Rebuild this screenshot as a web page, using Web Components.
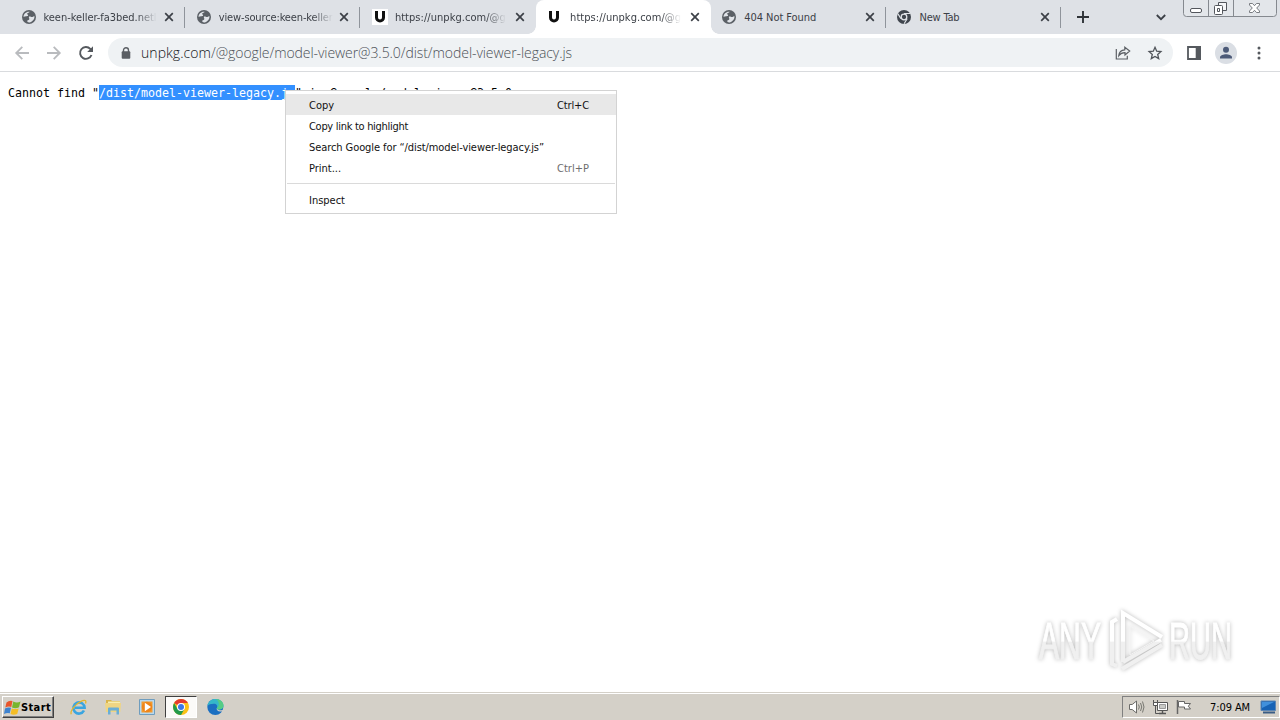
<!DOCTYPE html>
<html lang="en">
<head>
<meta charset="utf-8">
<title>unpkg</title>
<style>
  body {
    margin: 0;
    width: 1280px;
    height: 720px;
    overflow: hidden;
    background: #fff;
    font: 11px "DejaVu Sans Condensed", "DejaVu Sans", sans-serif;
    color: #000;
  }
</style>
</head>
<body>
<browser-window>
  <tab-strip slot="tabs">
    <browser-tab icon="globe" fit="113" fade>keen-keller-fa3bed.netl</browser-tab>
    <browser-tab icon="globe" fit="114" fade>view-source:keen-keller</browser-tab>
    <browser-tab icon="unpkgBox" fit="111" fade last>https://unpkg.com/@g</browser-tab>
    <browser-tab icon="unpkg" fit="111" fade active>https://unpkg.com/@g</browser-tab>
    <browser-tab icon="globe" fit="72">404 Not Found</browser-tab>
    <browser-tab icon="chromeMono" fit="40">New Tab</browser-tab>
  </tab-strip>
  <tool-bar slot="toolbar"></tool-bar>
  <page-view>
    <context-menu>
      <menu-item keys="Ctrl+C" fit="25" selected>Copy</menu-item>
      <menu-item fit="99">Copy link to highlight</menu-item>
      <menu-item fit="235">Search Google for “/dist/model-viewer-legacy.js”</menu-item>
      <menu-item keys="Ctrl+P" fit="32" dim>Print...</menu-item>
      <menu-line></menu-line>
      <menu-item fit="36">Inspect</menu-item>
    </context-menu>
    <any-run></any-run>
  </page-view>
</browser-window>
<task-bar></task-bar>

<script>
const ICONS = {
  globe: `<svg width="14" height="14" viewBox="0 0 14 14"><circle cx="7" cy="7" r="7" fill="#5b6066"/><path d="M7.600 1.700c-.3 1.300-2.400.8-2.500 2.100-.1.9 1.200.8 1 1.800-.2.8-1.300.6-2.100.7-.9.1-1.600.6-2.500.4C1.600 4 4 1.400 7.600 1.700z" fill="#e1e4e9"/><path d="M7 6.600c1.400-.5 1.900.6 3 .5 1-.1 1.200-1.200 2.500-.8.2 3-2.300 5.800-5 6.100-1.500.1-2.300-.5-2.300-1.400 0-1 1.300-.8 2-1.600.6-.8-.9-1.700-.2-2.800z" fill="#e1e4e9"/></svg>`,
  unpkg: `<svg width="12" height="12" viewBox="0 0 12 12"><path d="M2.500 0v6.500a3.500 3.500 0 0 0 7 0V0" fill="none" stroke="#111" stroke-width="3"/></svg>`,
  unpkgBox: `<svg width="16" height="16" viewBox="0 0 16 16"><path d="M0 0h16v16H0z" fill="#fff"/><path d="M4.500 2v6.500a3.500 3.500 0 0 0 7 0V2" fill="none" stroke="#111" stroke-width="3"/></svg>`,
  chromeMono: `<svg width="14" height="14" viewBox="0 0 14 14"><circle cx="7" cy="7" r="7" fill="#3f454d"/><circle cx="7" cy="7" r="2.800" fill="#3f454d" stroke="#dee1e6" stroke-width="1.300"/><path d="M7 3.500h6.200M3.900 8.600.9 3.700M10.100 8.700l-3 5" stroke="#dee1e6" stroke-width="1.200"/></svg>`,
  close: `<svg width="10" height="10" viewBox="0 0 10 10"><path d="M1.200 1.200l7.600 7.600M8.800 1.200L1.200 8.800" stroke="#3c4047" stroke-width="1.700"/></svg>`,
  plus: `<svg width="12" height="12" viewBox="0 0 12 12"><path d="M6 0v12M0 6h12" stroke="#2f3338" stroke-width="1.900"/></svg>`,
  chevron: `<svg width="10" height="7" viewBox="0 0 10 7"><path d="M.8 1L5 5.200 9.200 1" fill="none" stroke="#3c4047" stroke-width="1.800"/></svg>`,
  back: `<svg width="14" height="14" viewBox="0 0 14 14"><path d="M14 7H1.500M7.300.8L1.200 7l6.100 6.200" fill="none" stroke="#b9bbbe" stroke-width="1.800"/></svg>`,
  forward: `<svg width="14" height="14" viewBox="0 0 14 14"><path d="M0 7h12.500M6.700.8L12.800 7l-6.100 6.200" fill="none" stroke="#b9bbbe" stroke-width="1.800"/></svg>`,
  reload: `<svg width="14" height="14" viewBox="0 0 14 14"><path d="M12.500 9A5.900 5.900 0 1 1 11.300 2.900L13 4.800" fill="none" stroke="#55595e" stroke-width="1.900"/><path d="M14 .2V6H8.200z" fill="#55595e"/></svg>`,
  lock: `<svg width="10" height="12" viewBox="0 0 10 12"><path d="M2.500 5V3.200a2.500 2.500 0 0 1 5 0V5" fill="none" stroke="#5b5f64" stroke-width="1.400"/><rect x=".7" y="4.200" width="8.600" height="7.500" rx="1" fill="#5b5f64"/></svg>`,
  share: `<svg width="16" height="14" viewBox="0 0 16 14"><path d="M1.300 3v10h11V9.800M3.800 9.600c.3-3.600 2.400-5.600 6-5.800V1.200L14.700 5 10 9V6.700C7.400 6.700 5.300 7.600 3.800 9.600z" fill="none" stroke="#5b5f64" stroke-width="1.200"/></svg>`,
  star: `<svg width="14" height="14" viewBox="0 0 14 14"><path d="M7 1.300l1.700 3.900 4.200.4-3.200 2.800 1 4.200L7 10.400l-3.700 2.200 1-4.200L1.100 5.600l4.200-.4z" fill="none" stroke="#50545a" stroke-width="1.300"/></svg>`,
  panel: `<svg width="14" height="14" viewBox="0 0 14 14"><path d="M1 1h12v12H1z" fill="none" stroke="#55595e" stroke-width="1.800"/><path d="M8.700 0H14v14H8.700z" fill="#55595e"/></svg>`,
  person: `<svg width="22" height="22" viewBox="0 0 22 22"><circle cx="11" cy="11" r="11" fill="#dadee4"/><circle cx="11" cy="7.800" r="3" fill="#4c5a78"/><path d="M5 16.500v-1.300c0-2 3.700-3 6-3s6 1 6 3v1.300z" fill="#4c5a78"/></svg>`,
  dots: `<svg width="4" height="14" viewBox="0 0 4 14"><circle cx="2" cy="2" r="1.500"/><circle cx="2" cy="7" r="1.500"/><circle cx="2" cy="12" r="1.500"/></svg>`,
  caption: `<svg width="94" height="17" viewBox="0 0 94 17"><path d="M.5-1v14.500q0 3 3 3h87q3 0 3-3V-1" fill="#e3e6ea" stroke="#85898f"/><path d="M25.500 0v16M50.500 0v16" stroke="#85898f"/><rect x="7.500" y="8.500" width="11" height="4" rx="1.500" fill="#fff" stroke="#53565c"/><path d="M35.500 2.500h8v8h-8z" fill="#f4f5f7" stroke="#53565c"/><rect x="31.500" y="5.500" width="8" height="9" rx="1" fill="#fff" stroke="#53565c"/><path d="M34.500 8.500h2v3h-2z" fill="none" stroke="#53565c"/><path d="M66.500 3.500h3l2 2.200 2-2.200h3v1.500l-2.800 3 2.800 3v1.500h-3l-2-2.200-2 2.200h-3V11l2.800-3-2.800-3z" fill="#fff" stroke="#6b6e74" stroke-width=".9"/></svg>`,
  flag: `<svg width="17" height="17" viewBox="0 0 17 17"><path d="M2.500 3.500q2.500-2.300 6-1.500L7.300 8q-3-1-6 .6z" fill="#e8562c"/><path d="M9.300 2.500q3.500 2 7.200 0L15 8.300q-3.500 1.700-7 .2z" fill="#78b52e"/><path d="M1 9.500q3-1.700 6-.7L5.800 14.300q-3-.8-5.800.8z" fill="#3e83cf"/><path d="M7.800 9.400q3 1.300 6.900.2L13.200 15q-3.500 1.400-6.700.1z" fill="#f4bd25"/></svg>`,
  ie: `<svg width="18" height="17" viewBox="0 0 18 17"><path d="M14 11.500A5.600 5.600 0 1 1 14.600 8.800H5" fill="none" stroke="#3aa5e0" stroke-width="2.600"/><path d="M1.300 15.300C-.5 12 5.500 5 11 2.300c4-2 5.700-.8 4.500 2.200" fill="none" stroke="#e3b52e" stroke-width="1.300"/></svg>`,
  folder: `<svg width="17" height="16" viewBox="0 0 17 16"><path d="M1 1h5l1 1h8v5H1z" fill="#d9b44b"/><path d="M3 2.500h12v8H3z" fill="#f7eeb0"/><path d="M0 4h16l-.7 9H1z" fill="#efd583"/><path d="M3 15.500V9.500q0-1 1-1h9q1 0 1 1v6h-2.500v-4h-6v4z" fill="#6aaed6"/></svg>`,
  media: `<svg width="16" height="16" viewBox="0 0 16 16"><path d="M.5.500h15v15H.5z" fill="#b8d8ee" stroke="#6f9dbe"/><path d="M2.500 2.500h11v11h-11z" fill="#f39a2e"/><circle cx="8" cy="8" r="5.200" fill="#ef8519"/><path d="M5.800 3.800v8.400L12 8z" fill="#fff"/></svg>`,
  chrome: `<svg width="16" height="16" viewBox="0 0 16 16"><circle cx="8" cy="8" r="8" fill="#fbc116"/><path d="M8 8L1.100 4A8 8 0 0 1 14.900 4H8z" fill="#e33b2e"/><path d="M1.100 4A8 8 0 0 0 8 16l3.500-6L8 8 4.500 10z" fill="#229a4b"/><circle cx="8" cy="8" r="4" fill="#fff"/><circle cx="8" cy="8" r="3" fill="#3b78e7"/></svg>`,
  edge: `<svg width="17" height="16" viewBox="0 0 17 16"><circle cx="8.300" cy="8" r="8" fill="#1b6fc1"/><path d="M.4 7C1 2.500 4.600 0 8.500 0c5 0 8 3.500 8 6.600 0 2.700-2 4-4.300 4-2 0-3-.7-2.300-1.700C11 7 9.500 4.800 6.800 4.800 3.800 4.800 1.500 5.500.4 7z" fill="#35b8c9"/><path d="M9 .1c5 .2 7.500 3.600 7.500 6.500 0 2.700-2 4-4.300 4-2 0-3-.7-2.300-1.700 3.300-2 2.100-6.400-.9-8.800z" fill="#55cc85"/><path d="M17 10.200c-2 1.800-6.500 1.300-7.300-.7-.4 2 2.200 4 6 2.500z" fill="#d4d0c8"/></svg>`,
  sound: `<svg width="17" height="16" viewBox="0 0 17 16"><path d="M1.500 5.500h2.700L8.500 2v12l-4.300-3.500H1.500z" fill="#fff" stroke="#6b6b68"/><path d="M10.500 5.500q1.600 2.500 0 5M12.500 4q2.500 4 0 8M14.500 2.500q3 5.500 0 11" fill="none" stroke="#777771"/></svg>`,
  network: `<svg width="17" height="16" viewBox="0 0 17 16"><path d="M5.500 3.500h10v8h-10z" fill="#fff" stroke="#555"/><path d="M7.500 5.500h6v4h-6z" fill="#c9cac7" stroke="#999"/><path d="M7 14.500h7M10.500 12v2" stroke="#555" stroke-width="1.400"/><path d="M1.500 1v3.500h4V1M3.500 5v9.500H8" fill="none" stroke="#555"/><path d="M1.500 3.500h4v3h-4z" fill="#fff" stroke="#555"/></svg>`,
  action: `<svg width="16" height="16" viewBox="0 0 16 16"><path d="M1.500 1v14" stroke="#666" stroke-width="1.500"/><path d="M2.500 2.500h6v2h6l-2.200 2.700L14.500 10h-6V8h-6z" fill="#fff" stroke="#666"/></svg>`,
  desktop: `<svg width="17" height="15" viewBox="0 0 17 15"><path d="M1 1h14.500v9.500H1z" fill="#1762b5" stroke="#5c86b5"/><path d="M2 2h12L2 8z" fill="#4190dc"/><path d="M3 12.500h12" stroke="#3a5d85" stroke-width="2"/></svg>`
};

class PageIcon extends HTMLElement {
  connectedCallback() {
    const shadowRoot = this.attachShadow({ mode: "open" });
    shadowRoot.innerHTML = `
      <style>
        :host { display: inline-flex; flex: none; }
        svg { display: block; overflow: visible; }
      </style>
      ${ICONS[this.getAttribute("name")]}
    `;
  }
}

// one line of text, spaced out to the width in the "w" attribute
class FitText extends HTMLElement {
  connectedCallback() {
    const shadowRoot = this.attachShadow({ mode: "open" });
    shadowRoot.innerHTML = `
      <style>
        :host { display: block; white-space: nowrap; flex: none; }
      </style>
      <span></span>
    `;
    const span = shadowRoot.querySelector("span");
    span.textContent = this.getAttribute("text");
    const width = Number(this.getAttribute("w"));
    const natural = span.getBoundingClientRect().width;
    span.style.letterSpacing = (width - natural) / span.textContent.length + "px";
    this.style.width = width + "px";
  }
}

class BrowserWindow extends HTMLElement {
  connectedCallback() {
    const shadowRoot = this.attachShadow({ mode: "open" });
    shadowRoot.innerHTML = `
      <style>
        :host { display: flex; flex-direction: column; height: 692px; }
      </style>
      <slot name="tabs"></slot>
      <slot name="toolbar"></slot>
      <slot></slot>
    `;
  }
}

class TabStrip extends HTMLElement {
  connectedCallback() {
    const shadowRoot = this.attachShadow({ mode: "open" });
    shadowRoot.innerHTML = `
      <style>
        :host { display: flex; height: 34px; padding-left: 10px; background: #dee1e6; flex: none; }
        .tools { display: flex; flex: 1; align-items: center; padding-left: 16px; }
        .chevron { margin-left: 67px; }
        .caption { align-self: flex-start; margin: 0 3px 0 auto; }
      </style>
      <slot></slot>
      <div class="tools">
        <page-icon name="plus"></page-icon>
        <page-icon class="chevron" name="chevron"></page-icon>
        <page-icon class="caption" name="caption"></page-icon>
      </div>
    `;
  }
}

class BrowserTab extends HTMLElement {
  connectedCallback() {
    const shadowRoot = this.attachShadow({ mode: "open" });
    shadowRoot.innerHTML = `
      <style>
        :host {
          display: flex; align-items: center; flex: none; position: relative;
          box-sizing: border-box; width: 175.200px; height: 34px; padding: 0 10px 0 11.500px;
          border-right: 1px solid transparent;
          border-image: linear-gradient(transparent 8px, #8f949b 8px 27px, transparent 27px) 1;
          color: #3c4047;
        }
        :host([last]) { border-image: none; }
        :host([active]) { background: #fff; border-image: none; border-radius: 8px 8px 0 0; }
        :host([active])::before, :host([active])::after {
          content: ""; position: absolute; bottom: 0; width: 8px; height: 8px;
        }
        :host([active])::before { left: -8px; background: radial-gradient(circle at 0 0, transparent 7.500px, #fff 8px); }
        :host([active])::after { right: -9px; background: radial-gradient(circle at 100% 0, transparent 7.500px, #fff 8px); }
        .icon { width: 22px; display: flex; align-items: center; }
        .icon.unpkg { padding-left: 1px; width: 22px; }
        .icon.unpkgBox { width: 23px; }
        :host([fade]) fit-text { -webkit-mask: linear-gradient(90deg, #000 82%, transparent); mask: linear-gradient(90deg, #000 82%, transparent); }
        .close { margin-left: auto; }
      </style>
      <span class="icon ${this.getAttribute("icon")}"><page-icon name="${this.getAttribute("icon")}"></page-icon></span>
      <fit-text w="${this.getAttribute("fit")}" text="${this.textContent}"></fit-text>
      <page-icon class="close" name="close"></page-icon>
    `;
  }
}

class ToolBar extends HTMLElement {
  connectedCallback() {
    const shadowRoot = this.attachShadow({ mode: "open" });
    shadowRoot.innerHTML = `
      <style>
        :host {
          display: flex; align-items: center; flex: none; box-sizing: border-box;
          height: 38px; padding: 0 19px 0 15px; background: #fff; border-bottom: 1px solid #d9dbde;
        }
        .nav { display: flex; gap: 18px; width: 93px; }
        .url {
          display: flex; align-items: center; box-sizing: border-box; width: 1065px; height: 29px;
          padding: 0 11px 0 13px; border-radius: 15px; background: #eff2f4;
          font: 300 14px "Open Sans", "Noto Sans", sans-serif;
        }
        .host { margin-left: 10px; color: #111317; }
        .path { color: #4b5056; }
        .share { margin-left: auto; }
        .star { margin-left: 17px; }
        .right { display: flex; align-items: center; margin-left: 14px; gap: 14px; color: #55595e; }
        .dots { margin-left: 6px; fill: #55595e; }
      </style>
      <div class="nav">
        <page-icon name="back"></page-icon>
        <page-icon name="forward"></page-icon>
        <page-icon name="reload"></page-icon>
      </div>
      <div class="url">
        <page-icon name="lock"></page-icon>
        <fit-text class="host" w="70" text="unpkg.com"></fit-text>
        <fit-text class="path" w="361" text="/@google/model-viewer@3.5.0/dist/model-viewer-legacy.js"></fit-text>
        <page-icon class="share" name="share"></page-icon>
        <page-icon class="star" name="star"></page-icon>
      </div>
      <div class="right">
        <page-icon name="panel"></page-icon>
        <page-icon name="person"></page-icon>
        <page-icon class="dots" name="dots"></page-icon>
      </div>
    `;
  }
}

class PageView extends HTMLElement {
  connectedCallback() {
    const shadowRoot = this.attachShadow({ mode: "open" });
    shadowRoot.innerHTML = `
      <style>
        :host { display: block; position: relative; flex: 1; background: #fff; }
        pre { margin: 0; padding: 13px 8px; font: 11.630px/17px "DejaVu Sans Mono", monospace; }
        mark { display: inline-block; height: 15px; line-height: 17px; background: #3390ff; color: #fff; vertical-align: top; }
      </style>
      <pre>Cannot find "<mark>/dist/model-viewer-legacy.js</mark>" in @google/model-viewer@3.5.0</pre>
      <slot></slot>
    `;
  }
}

class ContextMenu extends HTMLElement {
  connectedCallback() {
    const shadowRoot = this.attachShadow({ mode: "open" });
    shadowRoot.innerHTML = `
      <style>
        :host {
          display: block; position: absolute; left: 285px; top: 18px; box-sizing: border-box;
          width: 332px; height: 124px; padding: 3px 0; border: 1px solid #d3d3d3; background: #fff;
        }
      </style>
      <slot></slot>
    `;
  }
}

class MenuItem extends HTMLElement {
  connectedCallback() {
    const shadowRoot = this.attachShadow({ mode: "open" });
    const keys = this.getAttribute("keys");
    shadowRoot.innerHTML = `
      <style>
        :host {
          display: flex; align-items: center; justify-content: space-between; box-sizing: border-box;
          height: 21px; padding: 1px 27px 0 23px; color: #111;
        }
        :host([selected]) { background: #e8e8e8; }
        :host([dim]) .keys { color: #6d6d6d; }
      </style>
      <fit-text w="${this.getAttribute("fit")}" text="${this.textContent}"></fit-text>
      ${keys ? `<fit-text class="keys" w="32" text="${keys}"></fit-text>` : ""}
    `;
  }
}

class MenuLine extends HTMLElement {
  connectedCallback() {
    const shadowRoot = this.attachShadow({ mode: "open" });
    shadowRoot.innerHTML = `
      <style>
        :host { display: block; height: 1px; margin: 5px 1px; background: #dadada; }
      </style>
    `;
  }
}

class AnyRun extends HTMLElement {
  connectedCallback() {
    const shadowRoot = this.attachShadow({ mode: "open" });
    shadowRoot.innerHTML = `
      <style>
        :host { display: block; position: absolute; left: 1030px; top: 530px; }
        svg { display: block; filter: drop-shadow(0 0 2px rgba(0, 0, 0, .28)); }
        text { font: 51px "Liberation Sans Narrow", "Liberation Sans", sans-serif; fill: url(#shade); stroke: url(#shade); }
      </style>
      <svg width="250" height="80" viewBox="0 0 250 80">
        <defs>
          <linearGradient id="shade" gradientUnits="userSpaceOnUse" x1="0" y1="0" x2="0" y2="80">
            <stop offset=".49" stop-color="#fff"/>
            <stop offset=".5" stop-color="#f0f0f0"/>
          </linearGradient>
        </defs>
        <text x="9" y="57" textLength="62" lengthAdjust="spacingAndGlyphs">ANY</text>
        <text x="139" y="57" textLength="63" lengthAdjust="spacingAndGlyphs">RUN</text>
        <g fill="none" stroke="url(#shade)" stroke-width="4">
          <path d="M93 60V11l39 24M93 60l38-22"/>
          <path d="M87 17l-5 3v42l5 2M92 67l40-24"/>
          <path d="M100 24v29l24-14z" stroke-width="1" stroke="#f4f4f4"/>
        </g>
      </svg>
    `;
  }
}

class TaskBar extends HTMLElement {
  connectedCallback() {
    const shadowRoot = this.attachShadow({ mode: "open" });
    shadowRoot.innerHTML = `
      <style>
        :host {
          display: flex; align-items: center; box-sizing: border-box; height: 28px;
          padding: 2px 0 1px 2px; background: #d4d0c8; border-top: 1px solid #d4d0c8;
          box-shadow: inset 0 1px #fff;
        }
        .start {
          display: flex; align-items: center; box-sizing: border-box; width: 52px; height: 22px; padding-left: 1px;
          border: 1px solid; border-color: #fff #404040 #404040 #fff; box-shadow: inset -1px -1px #808080;
          font: bold 11px "DejaVu Sans Condensed", "DejaVu Sans", sans-serif;
        }
        .apps { display: flex; align-items: center; padding-left: 8px; }
        .app { display: flex; align-items: center; justify-content: center; box-sizing: border-box; width: 32px; height: 22px; margin: 0 1px; }
        .app.open { background: #fbfaf8; border: 1px solid; border-color: #404040 #fff #fff #404040; }
        .tray {
          display: flex; align-items: center; box-sizing: border-box; width: 158px; height: 22px; margin-left: auto;
          padding-left: 5px; border: 1px solid; border-color: #808080 #fff #fff #808080; gap: 7px;
        }
        .clock { margin-left: 11px; }
        .desktop { margin-left: 3px; }
      </style>
      <div class="start"><page-icon name="flag"></page-icon><fit-text w="30" text="Start"></fit-text></div>
      <div class="apps">
        <span class="app"><page-icon name="ie"></page-icon></span>
        <span class="app"><page-icon name="folder"></page-icon></span>
        <span class="app"><page-icon name="media"></page-icon></span>
        <span class="app open"><page-icon name="chrome"></page-icon></span>
        <span class="app"><page-icon name="edge"></page-icon></span>
      </div>
      <div class="tray">
        <page-icon name="sound"></page-icon>
        <page-icon name="network"></page-icon>
        <page-icon name="action"></page-icon>
        <fit-text class="clock" w="40" text="7:09 AM"></fit-text>
        <page-icon class="desktop" name="desktop"></page-icon>
      </div>
    `;
  }
}

window.customElements.define("page-icon", PageIcon);
window.customElements.define("fit-text", FitText);
window.customElements.define("browser-window", BrowserWindow);
window.customElements.define("tab-strip", TabStrip);
window.customElements.define("browser-tab", BrowserTab);
window.customElements.define("tool-bar", ToolBar);
window.customElements.define("page-view", PageView);
window.customElements.define("context-menu", ContextMenu);
window.customElements.define("menu-item", MenuItem);
window.customElements.define("menu-line", MenuLine);
window.customElements.define("any-run", AnyRun);
window.customElements.define("task-bar", TaskBar);
</script>
</body>
</html>
